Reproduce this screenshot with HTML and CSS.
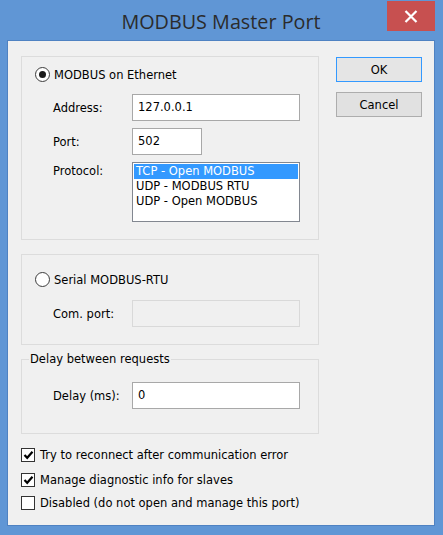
FILE: index.html
```html
<!DOCTYPE html>
<html>
<head>
<meta charset="utf-8">
<link rel="stylesheet" href="styles.css">
</head>
<body>
<div class="window">
  <div class="titlebar">
    <span class="title">MODBUS Master Port</span>
    <div class="close"><svg width="14" height="13" viewBox="0 0 14 13"><path d="M1.5 1 L12.5 12 M12.5 1 L1.5 12" stroke="#fff" stroke-width="2.2" fill="none"/></svg></div>
  </div>
  <div class="client">
    <div class="main">
      <div class="left">
        <div class="group group-eth">
          <label class="radio-row"><span class="radio checked"></span>MODBUS on Ethernet</label>
          <div class="form">
            <span class="lbl">Address:</span><div class="input wide">127.0.0.1</div>
            <span class="lbl">Port:</span><div class="input port">502</div>
            <span class="lbl top">Protocol:</span>
            <div class="listbox">
              <div class="item selected">TCP - Open MODBUS</div>
              <div class="item">UDP - MODBUS RTU</div>
              <div class="item">UDP - Open MODBUS</div>
            </div>
          </div>
        </div>
        <div class="group group-serial">
          <label class="radio-row"><span class="radio"></span>Serial MODBUS-RTU</label>
          <div class="form">
            <span class="lbl">Com. port:</span><div class="input wide disabled"></div>
          </div>
        </div>
        <fieldset class="group group-delay">
          <legend>Delay between requests</legend>
          <div class="form">
            <span class="lbl">Delay (ms):</span><div class="input wide">0</div>
          </div>
        </fieldset>
      </div>
      <div class="buttons">
        <div class="btn default">OK</div>
        <div class="btn">Cancel</div>
      </div>
    </div>
    <div class="checks">
      <label class="check-row c1"><span class="check on"><svg width="11" height="10" viewBox="0 0 11 10"><path d="M1.5 5 L4.2 7.8 L9.5 1.8" stroke="#000" stroke-width="2.2" fill="none"/></svg></span>Try to reconnect after communication error</label>
      <label class="check-row c2"><span class="check on"><svg width="11" height="10" viewBox="0 0 11 10"><path d="M1.5 5 L4.2 7.8 L9.5 1.8" stroke="#000" stroke-width="2.2" fill="none"/></svg></span>Manage diagnostic info for slaves</label>
      <label class="check-row c3"><span class="check"></span>Disabled (do not open and manage this port)</label>
    </div>
  </div>
</div>
</body>
</html>
```
FILE: styles.css
```css
* { box-sizing: border-box; }
html, body { margin: 0; padding: 0; }
body {
  font-family: "DejaVu Sans", sans-serif;
  font-size: 11.5px;
  line-height: 14px;
  color: #000;
}
.window {
  width: 443px;
  height: 535px;
  background: #6096d5;
  padding: 0 8px 9px 7px;
  display: flex;
  flex-direction: column;
  position: relative;
}
.titlebar {
  height: 40px;
  flex: none;
  display: flex;
  justify-content: center;
  align-items: center;
}
.title {
  font-family: "Open Sans", sans-serif;
  font-size: 19.8px;
  line-height: 26px;
  color: #2b2b2b;
  padding-top: 3px;
}
.close {
  position: absolute;
  top: 1px;
  right: 8px;
  width: 48px;
  height: 30px;
  background: #c75050;
  display: flex;
  align-items: center;
  justify-content: center;
}
.client {
  flex: 1;
  background: #f0f0f0;
  border: 1px solid #4f82c2;
  padding: 15px 0 0 13px;
}
.main {
  display: flex;
  gap: 17px;
}
.left {
  width: 298px;
  display: flex;
  flex-direction: column;
}
.group {
  border: 1px solid #dcdcdc;
}
.group-eth {
  padding: 10px 0 17px 13px;
}
.group-serial {
  margin-top: 14px;
  padding: 17px 0 17px 13px;
}
.group-delay {
  margin: 7px 0 0 0;
  padding: 0 0 24px 31px;
  min-width: 0;
}
.group-delay legend {
  padding: 0 1px;
  margin-left: -24px;
  line-height: 14px;
}
.group-delay .form {
  margin-left: 0;
  margin-top: 16px;
}
.radio-row {
  display: flex;
  align-items: center;
  gap: 4px;
  height: 15px;
}
.radio {
  width: 15px;
  height: 15px;
  border-radius: 50%;
  border: 1px solid #3c3c3c;
  background: #fff;
  display: flex;
  align-items: center;
  justify-content: center;
  flex: none;
}
.radio.checked::after {
  content: "";
  width: 7px;
  height: 7px;
  border-radius: 50%;
  background: #1a1a1a;
}
.form {
  display: grid;
  grid-template-columns: 79px auto;
  row-gap: 7px;
  align-items: center;
  justify-items: start;
  margin: 12px 0 0 18px;
}
.group-serial .form { margin-top: 13px; }
.lbl.top {
  align-self: start;
  padding-top: 2px;
}
.input {
  height: 27px;
  border: 1px solid #a8a8a8;
  background: #fff;
  padding: 5px 0 0 5px;
  line-height: 14px;
}
.input.wide { width: 168px; }
.input.port { width: 70px; }
.input.disabled {
  background: #f0f0f0;
  border-color: #d9d9d9;
}
.listbox {
  width: 168px;
  height: 60px;
  border: 1px solid #828790;
  background: #fff;
  padding: 1px 1px;
}
.item {
  height: 15px;
  line-height: 15px;
  padding-left: 2px;
}
.item.selected {
  background: #3399ff;
  color: #fff;
}
.buttons {
  display: flex;
  flex-direction: column;
  gap: 10px;
  padding-top: 1px;
}
.btn {
  width: 86px;
  height: 25px;
  border: 1px solid #adadad;
  background: #e1e1e1;
  display: flex;
  align-items: center;
  justify-content: center;
}
.btn.default {
  border-color: #3399ff;
  background: #e5e5e5;
}
.checks {
  display: flex;
  flex-direction: column;
}
.check-row {
  display: flex;
  align-items: center;
  gap: 5px;
  height: 14px;
}
.c1 { margin-top: 14px; }
.c2 { margin-top: 11px; }
.c3 { margin-top: 9px; }
.check {
  width: 14px;
  height: 14px;
  border: 1px solid #333;
  background: #fff;
  display: flex;
  align-items: center;
  justify-content: center;
  flex: none;
}
.check svg { display: block; }
```
